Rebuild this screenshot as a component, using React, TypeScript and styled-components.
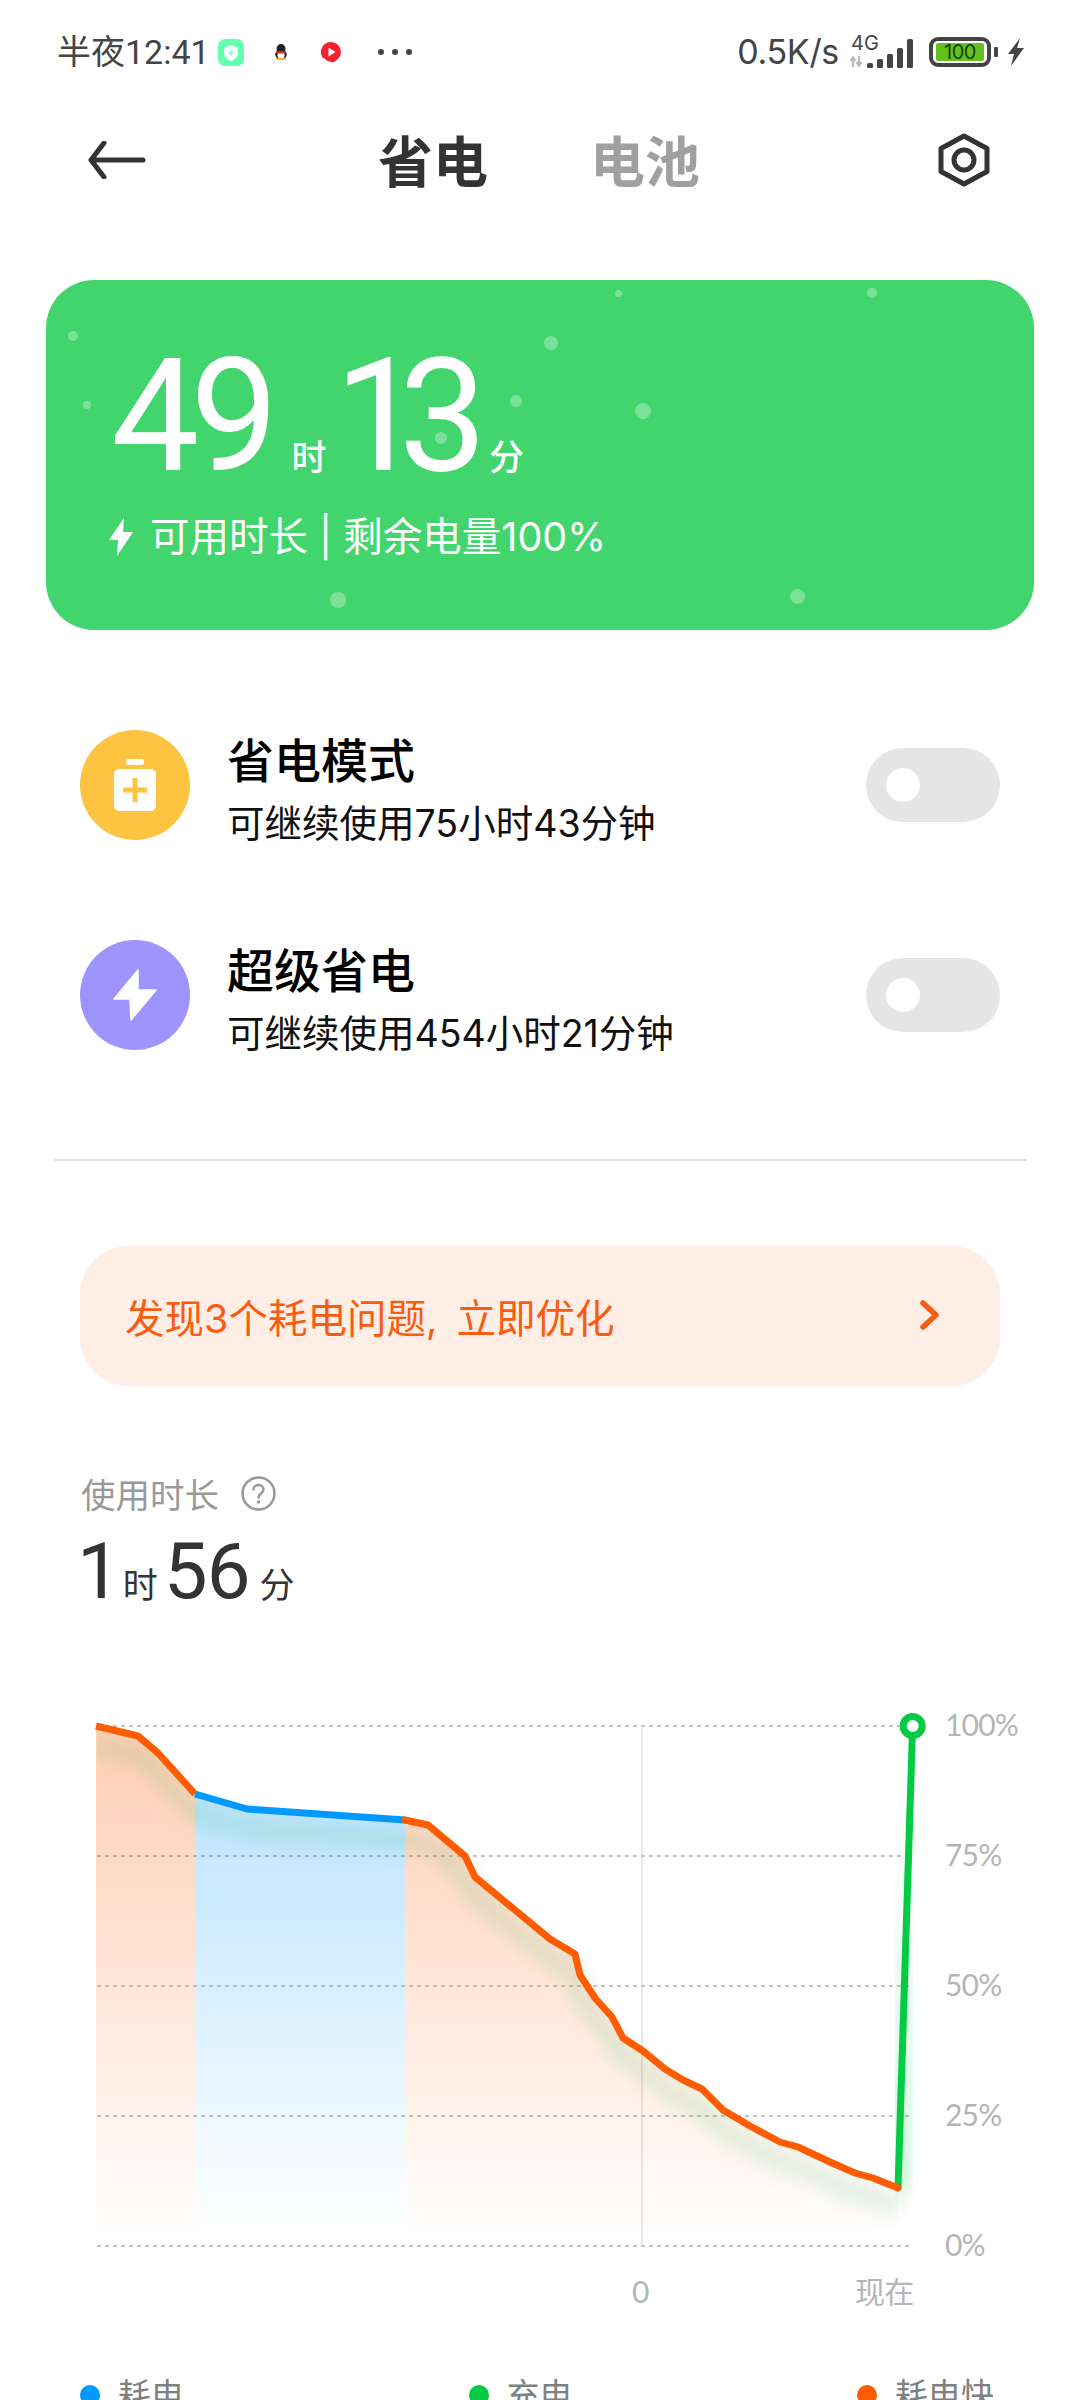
import React from "react";
import styled, { createGlobalStyle } from "styled-components";

const GlobalStyle = createGlobalStyle`
  html, body {
    margin: 0;
    padding: 0;
    background: #fff;
  }
  * {
    box-sizing: border-box;
  }
`;

const FONT = `Inter, "Noto Sans CJK SC", sans-serif`;

const Page = styled.div`
  width: 1080px;
  height: 2400px;
  overflow: hidden;
  background: #fff;
  font-family: ${FONT};
`;

const StatusBar = styled.div`
  display: flex;
  justify-content: space-between;
  align-items: center;
  height: 104px;
  padding: 0 55px 0 57px;
  color: #444;
`;

const StatusGroup = styled.div`
  display: flex;
  align-items: center;
`;

const Clock = styled.span`
  font-family: Roboto, "Noto Sans CJK SC", sans-serif;
  font-size: 34px;
  line-height: 40px;
  width: 161px;
  white-space: nowrap;
`;

const NotifyIcon = styled.svg<{ $gap: number }>`
  display: block;
  margin-right: ${(p) => p.$gap}px;
`;

const MoreDots = styled.div`
  display: flex;
  gap: 8px;
  margin-left: 37px;
`;

const MoreDot = styled.i`
  display: block;
  width: 6px;
  height: 6px;
  border-radius: 50%;
  background: #444;
`;

const Speed = styled.span`
  font-size: 34px;
  line-height: 40px;
  margin-right: 11px;
  letter-spacing: -0.3px;
`;

const BatteryBox = styled.div`
  display: flex;
  align-items: center;
  justify-content: center;
  width: 62px;
  height: 30px;
  border: 4px solid #444;
  border-radius: 9px;
  margin-left: 13px;
  padding: 2px 3px;
`;

const BatteryLevel = styled.div`
  display: flex;
  align-items: center;
  justify-content: center;
  width: 100%;
  height: 100%;
  border-radius: 2px;
  background: #62c11f;
  color: #1c3d0a;
  font-size: 20px;
  line-height: 18px;
  letter-spacing: -0.5px;
`;

const BatteryNub = styled.i`
  display: block;
  width: 4px;
  height: 10px;
  margin: 0 9px 0 3px;
  border-radius: 1px;
  background: #444;
`;

const NavBar = styled.div`
  display: grid;
  grid-template-columns: 1fr auto 1fr;
  align-items: center;
  height: 112px;
  padding: 0 90px 0 88px;
`;

const Tabs = styled.div`
  display: flex;
  gap: 102px;
  padding-top: 4px;
`;

const Tab = styled.span<{ $active?: boolean }>`
  font-size: 55px;
  line-height: 64px;
  font-weight: 700;
  color: ${(p) => (p.$active ? "#333" : "#a0a0a0")};
`;

const NavEnd = styled.div`
  display: flex;
  justify-content: flex-end;
`;

const TimeCard = styled.section`
  position: relative;
  width: 988px;
  height: 350px;
  margin: 64px 0 0 46px;
  padding: 71px 0 0 65px;
  overflow: hidden;
  border-radius: 48px;
  background: #42d56d;
  color: #fff;
`;

const Particle = styled.i<{ $x: number; $y: number; $r: number }>`
  position: absolute;
  left: ${(p) => p.$x - p.$r}px;
  top: ${(p) => p.$y - p.$r}px;
  width: ${(p) => p.$r * 2}px;
  height: ${(p) => p.$r * 2}px;
  border-radius: 50%;
  background: rgba(255, 255, 255, 0.3);
`;

const TimeRow = styled.div`
  position: relative;
  display: flex;
  align-items: baseline;
  height: 130px;
`;

const BigNumber = styled.span<{ $squeeze: number; $trim?: number }>`
  font-family: Roboto, sans-serif;
  font-size: 157px;
  line-height: 130px;
  letter-spacing: ${(p) => p.$squeeze}px;
  margin-right: ${(p) => p.$trim ?? 0}px;
`;

const BigUnit = styled.span`
  font-family: "Noto Sans CJK SC", sans-serif;
  font-size: 35px;
  line-height: 40px;
  font-weight: 500;
  margin: 0 8px 0 22px;
`;

const CardInfo = styled.div`
  position: relative;
  display: flex;
  align-items: center;
  gap: 16px;
  margin: 33px 0 0 -3px;
  font-size: 39.5px;
  line-height: 46px;
  white-space: nowrap;
`;

const ModeList = styled.div`
  display: flex;
  flex-direction: column;
  gap: 100px;
  margin-top: 100px;
  padding: 0 80px;
`;

const ModeRow = styled.div`
  display: flex;
  align-items: center;
  height: 110px;
`;

const ModeBadge = styled.div<{ $bg: string }>`
  display: flex;
  align-items: center;
  justify-content: center;
  flex: none;
  width: 110px;
  height: 110px;
  border-radius: 50%;
  background: ${(p) => p.$bg};
`;

const ModeText = styled.div`
  flex: 1;
  margin-left: 37px;
  padding-top: 8px;
`;

const ModeTitle = styled.div`
  font-size: 47px;
  line-height: 56px;
  font-weight: 500;
  color: #000;
`;

const ModeSub = styled.div`
  margin-top: 13px;
  font-size: 37.5px;
  line-height: 44px;
  color: #111;
  white-space: nowrap;
`;

const Toggle = styled.div`
  display: flex;
  align-items: center;
  flex: none;
  width: 134px;
  height: 74px;
  padding-left: 20px;
  border-radius: 37px;
  background: #e5e5e5;
`;

const Knob = styled.i`
  display: block;
  width: 34px;
  height: 34px;
  border-radius: 50%;
  background: #fff;
`;

const Divider = styled.hr`
  height: 2px;
  margin: 109px 53px 0 54px;
  border: 0;
  background: #dedede;
`;

const Banner = styled.div`
  display: flex;
  align-items: center;
  justify-content: space-between;
  height: 140px;
  margin: 85px 80px 0;
  padding: 0 60px 2px 45px;
  border-radius: 48px;
  background: #ffeee6;
  color: #f95c0f;
  font-size: 39.5px;
  word-spacing: 8px;
`;

const UsageSection = styled.section`
  margin-top: 89px;
  padding-left: 81px;
`;

const UsageLabel = styled.div`
  display: flex;
  align-items: center;
  gap: 22px;
  height: 36px;
  font-size: 34.5px;
  color: #999;
`;

const UsageValue = styled.div`
  display: flex;
  align-items: baseline;
  height: 70px;
  margin: 26px 0 0 -4px;
  color: #333;
`;

const UsageNumber = styled.span<{ $trim?: number }>`
  font-family: Roboto, sans-serif;
  font-size: 78px;
  line-height: 70px;
  letter-spacing: -1px;
  margin-right: ${(p) => p.$trim ?? 0}px;
`;

const UsageUnit = styled.span`
  font-family: "Noto Sans CJK SC", sans-serif;
  font-size: 35px;
  margin: 0 6px 0 10px;
`;

const ChartSvg = styled.svg`
  display: block;
  margin-top: 93px;
`;

const AxisText = styled.text`
  font-family: Lato, "Noto Sans CJK SC", sans-serif;
  font-size: 30px;
  letter-spacing: -0.8px;
  fill: #b5b5b5;
`;

const Legend = styled.div`
  display: grid;
  grid-template-columns: repeat(3, 388.5px);
  margin-top: 45px;
  padding-left: 80px;
`;

const LegendItem = styled.div`
  display: flex;
  align-items: center;
  gap: 18px;
  font-size: 33px;
  line-height: 40px;
  color: #808080;
`;

const LegendDot = styled.i<{ $color: string }>`
  display: block;
  width: 20px;
  height: 20px;
  border-radius: 50%;
  background: ${(p) => p.$color};
`;

const PARTICLES = [
  [27, 56, 5],
  [41, 125, 4],
  [572, 13, 3.5],
  [826, 13, 5],
  [505, 63, 7],
  [470, 121, 6],
  [597, 131, 8],
  [395, 158, 6],
  [292, 320, 8],
  [751, 316, 7.5],
];

const GRID_Y = [1726, 1856, 1986, 2116, 2246];
const Y_LABELS = ["100%", "75%", "50%", "25%", "0%"];

const FAST_A = [[96, 1726], [138, 1736], [158, 1753], [195, 1794]];
const SLOW = [[195, 1794], [247, 1809], [405, 1820]];
const FAST_B = [
  [405, 1820], [428, 1825], [465, 1856], [475, 1877], [550, 1939], [575, 1954],
  [580, 1975], [595, 1998], [612, 2017], [623, 2038], [643, 2051], [665, 2069],
  [683, 2080], [702, 2089], [723, 2110], [750, 2126], [780, 2142], [798, 2147],
  [830, 2162], [855, 2173], [873, 2178], [898, 2188],
];

const toPoints = (pts: number[][]) => pts.map((p) => p.join(",")).join(" ");
const toArea = (pts: number[][]) =>
  toPoints([...pts, [pts[pts.length - 1][0], 2246], [pts[0][0], 2246]]);

const Chart = () => {
  const allFast = [...FAST_A, ...SLOW.slice(1), ...FAST_B.slice(1)];
  return (
    <ChartSvg width="1080" height="630" viewBox="0 1700 1080 630">
      <defs>
        <linearGradient id="fastFill" gradientUnits="userSpaceOnUse" x1="0" y1="1726" x2="0" y2="2246">
          <stop offset="0" stopColor="#ff5c00" stopOpacity="0.3" />
          <stop offset="1" stopColor="#ff5c00" stopOpacity="0" />
        </linearGradient>
        <linearGradient id="slowFill" gradientUnits="userSpaceOnUse" x1="0" y1="1726" x2="0" y2="2240">
          <stop offset="0" stopColor="#0099ff" stopOpacity="0.3" />
          <stop offset="1" stopColor="#0099ff" stopOpacity="0" />
        </linearGradient>
        <linearGradient id="chargeGlow" gradientUnits="userSpaceOnUse" x1="0" y1="1800" x2="0" y2="2190">
          <stop offset="0" stopColor="#00cc44" stopOpacity="0" />
          <stop offset="1" stopColor="#00cc44" stopOpacity="0.3" />
        </linearGradient>
        <filter id="soft" x="-20%" y="-20%" width="140%" height="140%">
          <feGaussianBlur stdDeviation="9" />
        </filter>
        <clipPath id="plotClip">
          <rect x="97" y="1726" width="816" height="520" />
        </clipPath>
      </defs>

      {GRID_Y.map((y) => (
        <line key={y} x1="97" x2="913" y1={y} y2={y} stroke="#b0b0b0" strokeWidth="1.5" strokeDasharray="4 4" />
      ))}
      <line x1="642" x2="642" y1="1726" y2="2246" stroke="#d0d0d0" strokeWidth="1" />

      <polygon points={toArea(FAST_A)} fill="url(#fastFill)" />
      <polygon points={toArea(SLOW)} fill="url(#slowFill)" />
      <polygon points={toArea(FAST_B)} fill="url(#fastFill)" />

      <g clipPath="url(#plotClip)">
        <polyline
          points={toPoints(allFast)}
          transform="translate(0 20)"
          fill="none"
          stroke="#00a848"
          strokeOpacity="0.13"
          strokeWidth="18"
          filter="url(#soft)"
        />
        <polyline
          points="898,2190 913,1726"
          fill="none"
          stroke="url(#chargeGlow)"
          strokeWidth="18"
          filter="url(#soft)"
        />
      </g>

      <polyline points={toPoints(FAST_A)} fill="none" stroke="#ff5c00" strokeWidth="7" strokeLinejoin="round" />
      <polyline points={toPoints(SLOW)} fill="none" stroke="#0099ff" strokeWidth="7" strokeLinejoin="round" />
      <polyline points="898,2188 912.5,1730" fill="none" stroke="#03cc44" strokeWidth="7" />
      <polyline points={toPoints(FAST_B)} fill="none" stroke="#ff5c00" strokeWidth="7" strokeLinejoin="round" strokeLinecap="round" />
      <circle cx="912.7" cy="1726" r="9.5" fill="#fff" stroke="#03cc44" strokeWidth="7" />

      {Y_LABELS.map((label, i) => (
        <AxisText key={label} x="945" y={GRID_Y[i] + 10}>
          {label}
        </AxisText>
      ))}
      <AxisText x="632" y="2303">0</AxisText>
      <AxisText x="855" y="2303">现在</AxisText>
    </ChartSvg>
  );
};

const ChargingBolt = () => (
  <svg width="26" height="38" viewBox="0 0 26 38">
    <path d="M16 0 L1 22 H10 L9 38 L25 14 H15 Z" fill="#fff" />
  </svg>
);

const App = () => (
  <Page>
    <GlobalStyle />
    <StatusBar>
      <StatusGroup>
        <Clock>半夜12:41</Clock>
        <NotifyIcon $gap={30} width="26" height="27" viewBox="0 0 26 27">
          <rect width="26" height="27" rx="7" fill="#66ffb2" />
          <path d="M13 6 L20 8.5 V14 C20 18 17 20.5 13 22 C9 20.5 6 18 6 14 V8.5 Z" fill="#f2fff9" />
          <path d="M13 11 V17 M10 14 H16" stroke="#9df5c9" strokeWidth="1.4" />
        </NotifyIcon>
        <NotifyIcon $gap={33} width="14" height="16" viewBox="0 0 14 16">
          <ellipse cx="7" cy="5" rx="4.5" ry="5" fill="#222" />
          <ellipse cx="7" cy="10.5" rx="5.8" ry="4.8" fill="#222" />
          <ellipse cx="7" cy="11" rx="3.6" ry="3.6" fill="#fff" />
          <rect x="2" y="7" width="10" height="2.6" rx="1" fill="#d8252b" />
          <rect x="2" y="14" width="10" height="2" rx="1" fill="#f3b61f" />
        </NotifyIcon>
        <NotifyIcon $gap={0} width="20" height="21" viewBox="0 0 20 21">
          <path d="M10 0 A10 10 0 1 1 10 20 Q12 21 15 19 Q8 21 5 18 Q4 16 2 16 A10 10 0 0 1 10 0 Z" fill="#f5222d" />
          <path d="M7.5 5.5 L14.5 10 L7.5 14.5 Z" fill="#fff" />
        </NotifyIcon>
        <MoreDots>
          <MoreDot />
          <MoreDot />
          <MoreDot />
        </MoreDots>
      </StatusGroup>
      <StatusGroup>
        <Speed>0.5K/s</Speed>
        <svg width="66" height="36" viewBox="0 -2 66 36">
          <text x="1" y="14" fontFamily="Inter, sans-serif" fontSize="20" fill="#444">4G</text>
          <path d="M3 31 V22 M0.5 25 L3 21.5 L5.5 25 M9 20 V29 M6.5 26 L9 29.5 L11.5 26" stroke="#bbb" strokeWidth="2.2" fill="none" />
          <rect x="17" y="27" width="6" height="5" rx="1.5" fill="#444" />
          <rect x="27" y="23" width="6" height="9" rx="1.5" fill="#444" />
          <rect x="37" y="18" width="6" height="14" rx="1.5" fill="#444" />
          <rect x="47" y="12" width="6" height="20" rx="1.5" fill="#444" />
          <rect x="57" y="3" width="6" height="29" rx="1.5" fill="#444" />
        </svg>
        <BatteryBox>
          <BatteryLevel>100</BatteryLevel>
        </BatteryBox>
        <BatteryNub />
        <svg width="18" height="28" viewBox="0 0 18 28">
          <path d="M13 0 L1 16 H7 L4 28 L17 10 H10 Z" fill="#444" />
        </svg>
      </StatusGroup>
    </StatusBar>

    <NavBar>
      <svg width="58" height="38" viewBox="0 0 58 38">
        <path d="M55 19 H3 M16 2 L3 19 L16 36" fill="none" stroke="#333" strokeWidth="5" strokeLinecap="round" strokeLinejoin="round" />
      </svg>
      <Tabs>
        <Tab $active>省电</Tab>
        <Tab>电池</Tab>
      </Tabs>
      <NavEnd>
        <svg width="52" height="54" viewBox="0 0 52 54">
          <path d="M26 3 L49 15.5 V38.5 L26 51 L3 38.5 V15.5 Z" fill="none" stroke="#333" strokeWidth="5" strokeLinejoin="round" />
          <circle cx="26" cy="27" r="10" fill="none" stroke="#333" strokeWidth="5" />
        </svg>
      </NavEnd>
    </NavBar>

    <TimeCard>
      {PARTICLES.map(([x, y, r]) => (
        <Particle key={`${x}-${y}`} $x={x} $y={y} $r={r} />
      ))}
      <TimeRow>
        <BigNumber $squeeze={-9}>49</BigNumber>
        <BigUnit>时</BigUnit>
        <BigNumber $squeeze={-24} $trim={4}>13</BigNumber>
        <BigUnit>分</BigUnit>
      </TimeRow>
      <CardInfo>
        <ChargingBolt />
        <span>可用时长 | 剩余电量100%</span>
      </CardInfo>
    </TimeCard>

    <ModeList>
      <ModeRow>
        <ModeBadge $bg="#fec341">
          <svg width="42" height="52" viewBox="0 0 42 52">
            <rect x="12" y="0" width="18" height="6" rx="3" fill="#fff" />
            <rect x="0" y="10" width="42" height="42" rx="5" fill="#fff" />
            <path d="M21 19 V43 M9 31 H33" stroke="#fec341" strokeWidth="5" />
          </svg>
        </ModeBadge>
        <ModeText>
          <ModeTitle>省电模式</ModeTitle>
          <ModeSub>可继续使用75小时43分钟</ModeSub>
        </ModeText>
        <Toggle>
          <Knob />
        </Toggle>
      </ModeRow>
      <ModeRow>
        <ModeBadge $bg="#9f94ff">
          <svg width="44" height="52" viewBox="0 0 44 52">
            <path d="M25 1 L1 30 H17 L18 51 L43 21 H25 Z" fill="#fff" stroke="#fff" strokeWidth="1.5" strokeLinejoin="round" />
          </svg>
        </ModeBadge>
        <ModeText>
          <ModeTitle>超级省电</ModeTitle>
          <ModeSub>可继续使用454小时21分钟</ModeSub>
        </ModeText>
        <Toggle>
          <Knob />
        </Toggle>
      </ModeRow>
    </ModeList>

    <Divider />

    <Banner>
      <span>发现3个耗电问题, 立即优化</span>
      <svg width="20" height="30" viewBox="0 0 20 30">
        <path d="M3 3 L16 15 L3 27" fill="none" stroke="#f95c0f" strokeWidth="5.5" strokeLinecap="round" strokeLinejoin="round" />
      </svg>
    </Banner>

    <UsageSection>
      <UsageLabel>
        <span>使用时长</span>
        <svg width="35" height="35" viewBox="0 0 35 35">
          <circle cx="17.5" cy="17.5" r="16" fill="none" stroke="#999" strokeWidth="2.5" />
          <path d="M12.5 13.5 C12.5 7.5 22.5 7.5 22.5 13.5 C22.5 17 17.5 17.5 17.5 21.5" fill="none" stroke="#999" strokeWidth="2.5" strokeLinecap="round" />
          <circle cx="17.5" cy="26" r="1.7" fill="#999" />
        </svg>
      </UsageLabel>
      <UsageValue>
        <UsageNumber $trim={-7}>1</UsageNumber>
        <UsageUnit>时</UsageUnit>
        <UsageNumber>56</UsageNumber>
        <UsageUnit>分</UsageUnit>
      </UsageValue>
    </UsageSection>

    <Chart />

    <Legend>
      <LegendItem>
        <LegendDot $color="#0099ff" />
        耗电
      </LegendItem>
      <LegendItem>
        <LegendDot $color="#03cc44" />
        充电
      </LegendItem>
      <LegendItem>
        <LegendDot $color="#ff5c00" />
        耗电快
      </LegendItem>
    </Legend>
  </Page>
);

export default App;
